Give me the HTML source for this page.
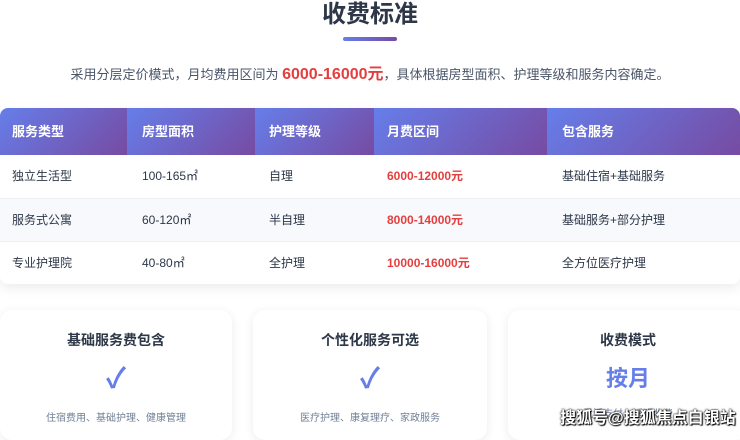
<!DOCTYPE html>
<html><head><meta charset="utf-8"><style>
*{margin:0;padding:0;box-sizing:border-box}
body{width:740px;height:433px;overflow:hidden;background:#fff;font-family:"Liberation Sans","Noto Sans CJK SC",sans-serif;position:relative}
.t{position:absolute;left:0;width:740px;text-align:center;top:0;font-size:24px;font-weight:700;color:#2d3748;line-height:30px}
.bar{position:absolute;left:343px;top:37px;width:54px;height:4px;border-radius:2px;background:linear-gradient(90deg,#667eea,#764ba2)}
.sub{position:absolute;left:0;width:740px;text-align:center;top:64px;font-size:13px;color:#4a5568;line-height:22px}
.sub b{color:#e53e3e;font-size:16px}
.tbl{position:absolute;left:0;top:108px;width:740px;height:176px;border-radius:8px;overflow:hidden;box-shadow:0 4px 12px rgba(0,0,0,.08)}
.row{position:absolute;left:0;width:740px;height:43px}
.c{position:absolute;top:0;height:100%;font-size:12px;color:#2d3748;line-height:43px;padding-left:12px}
.h .c{background:linear-gradient(135deg,#667eea,#764ba2);color:#fff;font-weight:700;height:47px;line-height:47px;font-size:13px}
.r{color:#e53e3e;font-weight:700}
.card{position:absolute;top:310px;height:130px;background:#fff;border-radius:12px;box-shadow:0 2px 10px rgba(0,0,0,.08);text-align:center}
.card h3{margin-top:20px;font-size:14px;color:#2d3748;line-height:20px}
.ck{font-size:28px;color:#667eea;margin-top:13px;line-height:32px;font-weight:700}
.card p{font-size:10px;color:#718096;margin-top:14px}
.wm{position:absolute;left:560px;top:404px;font-size:16px;font-weight:700;color:#fff;text-shadow:0 0 2px #000,0 0 1px #000,1px 1px 1px #000}
</style></head><body>
<div class="t">收费标准</div><div class="bar"></div>
<div class="sub">采用分层定价模式，月均费用区间为 <b>6000-16000元</b>，具体根据房型面积、护理等级和服务内容确定。</div>
<div class="tbl">
<div class="row h" style="top:0"><div class="c" style="left:0;width:127px">服务类型</div><div class="c" style="left:127px;width:128px;padding-left:15px">房型面积</div><div class="c" style="left:255px;width:119px;padding-left:14px">护理等级</div><div class="c" style="left:374px;width:173px;padding-left:13px">月费区间</div><div class="c" style="left:547px;width:193px;padding-left:15px">包含服务</div></div>
<div class="row" style="top:47px;background:#fff"><div class="c" style="left:0">独立生活型</div><div class="c" style="left:130px">100-165㎡</div><div class="c" style="left:257px">自理</div><div class="c r" style="left:375px">6000-12000元</div><div class="c" style="left:550px">基础住宿+基础服务</div></div>
<div class="row" style="top:90px;background:#f7f9fc;border-top:1px solid #edf0f4"><div class="c" style="left:0">服务式公寓</div><div class="c" style="left:130px">60-120㎡</div><div class="c" style="left:257px">半自理</div><div class="c r" style="left:375px">8000-14000元</div><div class="c" style="left:550px">基础服务+部分护理</div></div>
<div class="row" style="top:133px;background:#fff;border-top:1px solid #edf0f4"><div class="c" style="left:0">专业护理院</div><div class="c" style="left:130px">40-80㎡</div><div class="c" style="left:257px">全护理</div><div class="c r" style="left:375px">10000-16000元</div><div class="c" style="left:550px">全方位医疗护理</div></div>
</div>
<div class="card" style="left:0;width:232px"><h3>基础服务费包含</h3><div class="ck">✓</div><p>住宿费用、基础护理、健康管理</p></div>
<div class="card" style="left:253px;width:234px"><h3>个性化服务可选</h3><div class="ck">✓</div><p>医疗护理、康复理疗、家政服务</p></div>
<div class="card" style="left:508px;width:240px"><h3>收费模式</h3><div class="ck" style="font-size:22px;margin-top:13px">按月</div><p style="margin-top:10px">灵活支付，透明收费</p></div>
<div class="wm">搜狐号@搜狐焦点白银站</div>
</body></html>
